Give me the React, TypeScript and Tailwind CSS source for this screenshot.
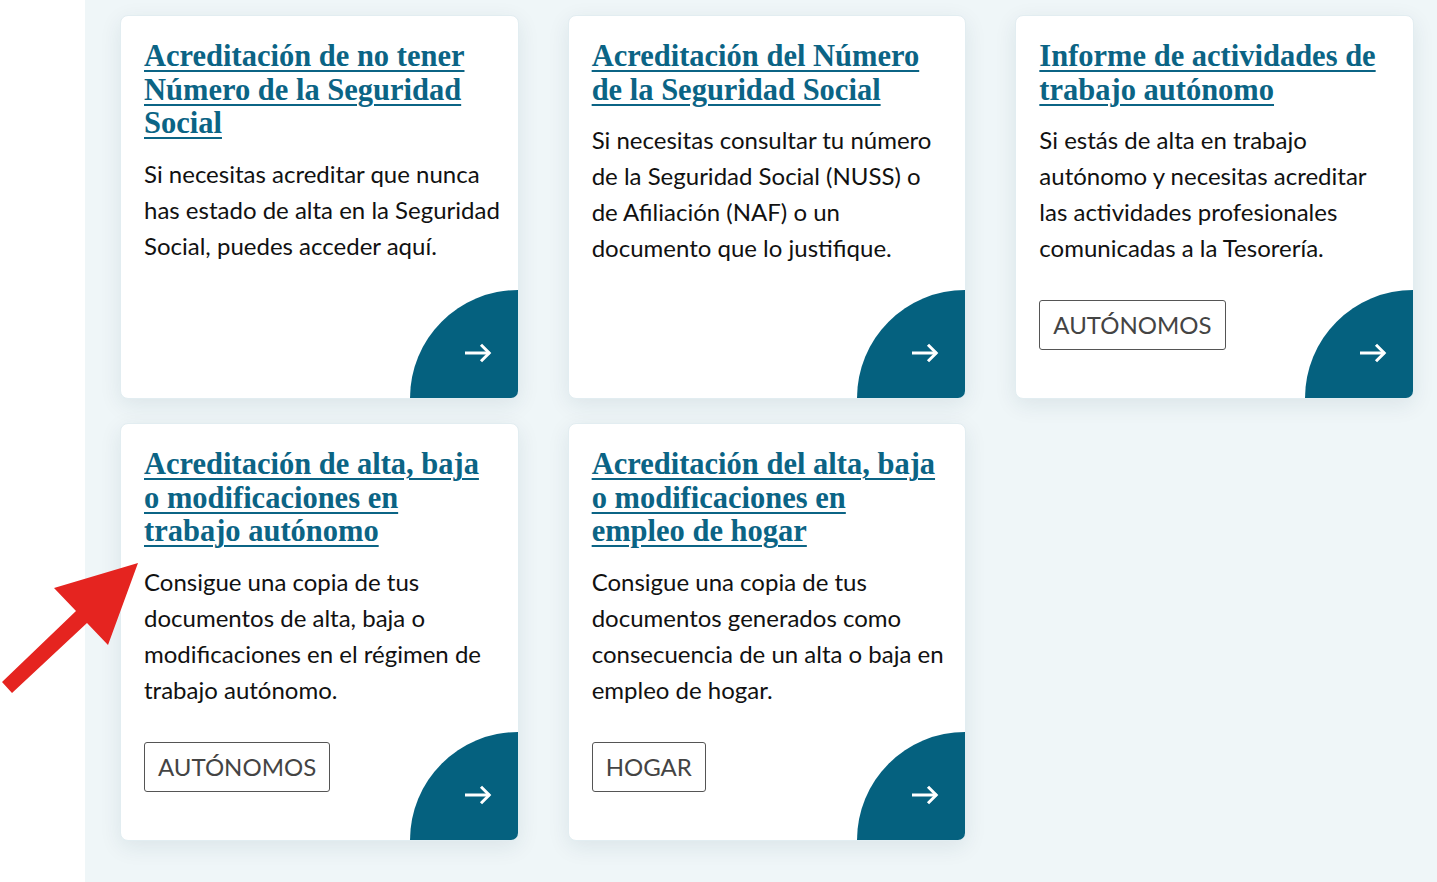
import React from 'react';

type Tramite = {
  title: string[];
  body: string[];
  tag?: string;
};

const tramites: Tramite[] = [
  {
    title: ['Acreditación de no tener', 'Número de la Seguridad', 'Social'],
    body: ['Si necesitas acreditar que nunca', 'has estado de alta en la Seguridad', 'Social, puedes acceder aquí.'],
  },
  {
    title: ['Acreditación del Número', 'de la Seguridad Social'],
    body: ['Si necesitas consultar tu número', 'de la Seguridad Social (NUSS) o', 'de Afiliación (NAF) o un', 'documento que lo justifique.'],
  },
  {
    title: ['Informe de actividades de', 'trabajo autónomo'],
    body: ['Si estás de alta en trabajo', 'autónomo y necesitas acreditar', 'las actividades profesionales', 'comunicadas a la Tesorería.'],
    tag: 'AUTÓNOMOS',
  },
  {
    title: ['Acreditación de alta, baja', 'o modificaciones en', 'trabajo autónomo'],
    body: ['Consigue una copia de tus', 'documentos de alta, baja o', 'modificaciones en el régimen de', 'trabajo autónomo.'],
    tag: 'AUTÓNOMOS',
  },
  {
    title: ['Acreditación del alta, baja', 'o modificaciones en', 'empleo de hogar'],
    body: ['Consigue una copia de tus', 'documentos generados como', 'consecuencia de un alta o baja en', 'empleo de hogar.'],
    tag: 'HOGAR',
  },
];

function ArrowIcon() {
  return (
    <svg width="28" height="20" viewBox="0 0 28 20" fill="none" stroke="white" strokeWidth="3" strokeLinecap="butt" strokeLinejoin="miter">
      <path d="M1 10H25.5" />
      <path d="M17 1.8L25.2 10L17 18.2" />
    </svg>
  );
}

function TramiteCard({ t }: { t: Tramite }) {
  return (
    <div className="relative overflow-hidden rounded-lg bg-white border border-[#e2edf1] shadow-[0_6px_22px_rgba(20,60,80,0.09)] pt-[24px] pb-[48px] px-[23px]">
      <a
        href="#"
        className="block whitespace-nowrap text-[30.5px] leading-[33.6px] font-bold text-[#0b6485] underline decoration-2 underline-offset-[4px]"
        style={{ fontFamily: '"Liberation Serif", serif' }}
      >
        {t.title.map((l, i) => (
          <React.Fragment key={i}>
            {l}
            {i < t.title.length - 1 && <br />}
          </React.Fragment>
        ))}
      </a>
      <p className="mt-[15px] whitespace-nowrap text-[24px] leading-[36px] text-[#111]" style={{ fontFamily: 'Lato, sans-serif' }}>
        {t.body.map((l, i) => (
          <React.Fragment key={i}>
            {l}
            {i < t.body.length - 1 && <br />}
          </React.Fragment>
        ))}
      </p>
      {t.tag && (
        <div className="mt-[34px]">
          <span
            className="inline-flex items-center h-[50px] px-[13px] border border-[#555] rounded-[3px] text-[24px] text-[#444]"
            style={{ fontFamily: 'Lato, sans-serif' }}
          >
            {t.tag}
          </span>
        </div>
      )}
      <div className="absolute right-0 bottom-0 w-[108px] h-[108px] bg-[#05617f] rounded-tl-[108px]">
        <div className="absolute right-[26px] bottom-[35px]">
          <ArrowIcon />
        </div>
      </div>
    </div>
  );
}

export default function App() {
  return (
    <div className="relative flex h-[882px] w-full bg-white overflow-hidden">
      <div className="w-[85px] shrink-0 bg-white" />
      <main className="flex-1 bg-[#eff6f8] pl-[35px] pr-[23px] pt-[15px]">
        <div className="grid grid-cols-3 gap-x-[49px] gap-y-[24px]">
          {tramites.map((t, i) => (
            <TramiteCard key={i} t={t} />
          ))}
        </div>
      </main>
      <svg className="absolute left-0 top-0 pointer-events-none" width="150" height="700" viewBox="0 0 150 700">
        <polygon
          points="138,563 54,588 76,611 2,682 12,693 87,623 108,645"
          fill="#e52420"
        />
      </svg>
    </div>
  );
}
